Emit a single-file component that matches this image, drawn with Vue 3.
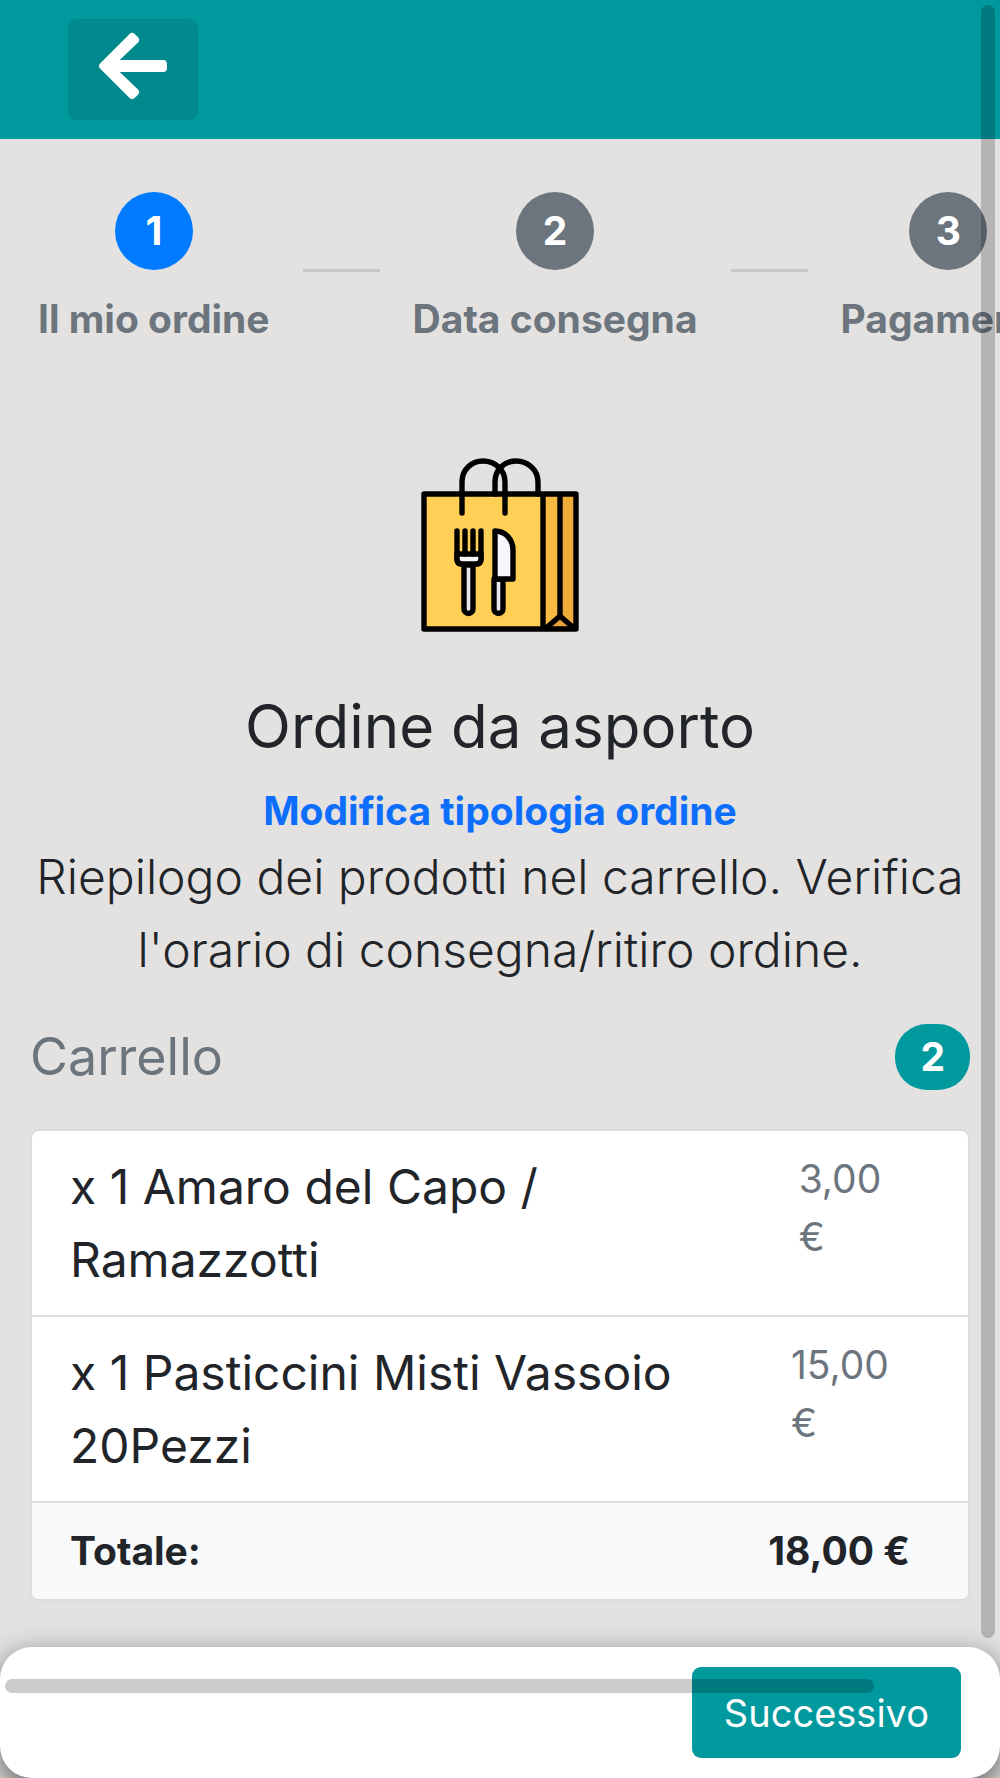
<script setup>
const steps = [
  { number: 1, label: 'Il mio ordine', active: true },
  { number: 2, label: 'Data consegna', active: false },
  { number: 3, label: 'Pagamento', active: false },
]

const items = [
  { quantity: 1, name: 'Amaro del Capo / Ramazzotti', price: '3,00 €' },
  { quantity: 1, name: 'Pasticcini Misti Vassoio 20Pezzi', price: '15,00 €' },
]
</script>

<template>
  <div class="page">
    <header class="navbar">
      <button class="back" type="button" aria-label="Indietro">
        <svg viewBox="0 0 448 512" aria-hidden="true">
          <path
            fill="currentColor"
            d="M257.5 445.1l-22.2 22.2c-9.4 9.4-24.6 9.4-33.9 0L7 273c-9.4-9.4-9.4-24.6 0-33.9L201.4 44.7c9.4-9.4 24.6-9.4 33.9 0l22.2 22.2c9.5 9.5 9.3 25-.4 34.3L136.6 216H424c13.3 0 24 10.7 24 24v32c0 13.3-10.7 24-24 24H136.6l120.5 114.8c9.8 9.3 10 24.8.4 34.3z"
          />
        </svg>
      </button>
    </header>

    <nav class="stepper" aria-label="Fasi dell'ordine">
      <template v-for="(step, index) in steps" :key="step.number">
        <span v-if="index > 0" class="line"></span>
        <button class="step" type="button">
          <span class="circle" :class="{ active: step.active }">{{ step.number }}</span>
          <span class="label">{{ step.label }}</span>
        </button>
      </template>
    </nav>

    <main class="content">
      <section class="intro">
        <svg class="bag" viewBox="0 0 158 174" aria-hidden="true">
          <path d="M3 36H122V171H3Z" fill="#ffcf56" />
          <path d="M122 36H139V171H122Z" fill="#f6bb42" />
          <path d="M139 36H155V171H139Z" fill="#eead38" />
          <path d="M126 171L139 160L152 171Z" fill="#e6a035" />
          <g fill="none" stroke="#000" stroke-width="5.4" stroke-linecap="round" stroke-linejoin="round">
            <path d="M3 36H155V171H3ZM122 36V171M139 36V158M124 171L139 158L154 171" />
            <path d="M41 55V24C41 12 50 3 62 3S84 12 84 24V55" />
            <path d="M74 36V24C74 12 83 3 95 3S117 12 117 24V36" />
            <path d="M43 107H52V151A4.500 4.500 0 0 1 43 151Z" fill="#e6e9ed" />
            <path d="M36 73V101Q36 106 41 106H55Q60 106 60 101V73" />
            <path d="M36 96H60V101Q60 106 55 106H41Q36 106 36 101Z" fill="#f5f7fa" />
            <path d="M44 73V96M52 73V96" />
            <path d="M73 121H82V151A4.500 4.500 0 0 1 73 151Z" fill="#e6e9ed" />
            <path d="M74 73C84 73 92 81 92 92V121H74Z" fill="#f5f7fa" />
          </g>
        </svg>
        <h1>Ordine da asporto</h1>
        <a href="#tipologia">Modifica tipologia ordine</a>
        <p>Riepilogo dei prodotti nel carrello. Verifica l'orario di consegna/ritiro ordine.</p>
      </section>

      <section class="cart">
        <div class="cart-head">
          <h2>Carrello</h2>
          <span class="badge">{{ items.length }}</span>
        </div>
        <ul>
          <li v-for="item in items" :key="item.name">
            <span class="name">x {{ item.quantity }} {{ item.name }}</span>
            <span class="price"><span>{{ item.price }}</span></span>
          </li>
          <li class="total">
            <strong>Totale:</strong>
            <strong>18,00 €</strong>
          </li>
        </ul>
      </section>
    </main>

    <footer class="actions">
      <button class="next" type="button">Successivo</button>
    </footer>

    <div class="scroll-y"></div>
    <div class="scroll-x"></div>
  </div>
</template>

<style>
body {
  margin: 0;
  background: #e4e2e1;
}
</style>

<style scoped>
.page {
  box-sizing: border-box;
  min-height: 100vh;
  padding-bottom: 178px;
  overflow: hidden;
  background: #e4e2e1;
  color: #212529;
  font-family: Inter, "Liberation Sans", sans-serif;
  font-size: 39px;
  font-variant-ligatures: none;
  line-height: 58px;
}

button {
  border: 0;
  font: inherit;
  cursor: pointer;
}

.navbar {
  display: flex;
  padding: 19px 68px;
  background: #00999e;
}

.back {
  display: flex;
  padding: 8px 31px 15px;
  border-radius: 9px;
  background: #008a8e;
  color: #fff;
}

.back svg {
  width: 68px;
  height: 78px;
}

.stepper {
  display: flex;
  align-items: center;
  padding: 34px 5px 0;
}

.step {
  display: flex;
  flex: none;
  flex-direction: column;
  align-items: center;
  gap: 20px;
  padding: 19px 33px;
  background: none;
  color: #6c757d;
  font-weight: 700;
  white-space: nowrap;
}

.circle {
  width: 78px;
  border-radius: 50%;
  background: #6c757d;
  color: #fff;
  line-height: 78px;
  text-align: center;
}

.circle.active {
  background: #007bff;
}

.line {
  flex: none;
  width: 77px;
  height: 3px;
  background: #c9c8c7;
}

.content {
  padding: 91px 30px 0;
}

.intro {
  display: flex;
  flex-direction: column;
  align-items: center;
  text-align: center;
}

.bag {
  width: 158px;
  height: 174px;
}

h1 {
  margin: 58px 0 20px;
  font-size: 60px;
  font-weight: 400;
  line-height: 72px;
}

a {
  color: #0d6efd;
  font-weight: 700;
  text-decoration: none;
}

p {
  margin: 0;
  font-size: 48px;
  font-weight: 300;
  line-height: 73px;
}

.cart-head {
  display: flex;
  align-items: center;
  justify-content: space-between;
  margin: 38px 0 39px;
}

h2 {
  margin: 0;
  color: #6c757d;
  font-size: 52px;
  font-weight: 400;
  line-height: 62px;
}

.badge {
  padding: 0 25px;
  border-radius: 32px;
  background: #00999e;
  color: #fff;
  font-weight: 700;
  line-height: 66px;
}

ul {
  margin: 0;
  padding: 0;
  border: 2px solid #dcdcdd;
  border-radius: 9px;
  background: #fff;
  list-style: none;
  overflow: hidden;
}

li {
  display: flex;
  justify-content: space-between;
  padding: 19px 58px 19px 38px;
}

li + li {
  border-top: 2px solid #dcdcdd;
}

.name {
  flex: 0 1 640px;
  font-size: 48px;
  line-height: 73px;
}

.price {
  display: flex;
  flex: 0 0 140px;
  justify-content: center;
  color: #6c757d;
}

.price span {
  width: min-content;
}

.total {
  background: #f8f9fa;
}

.actions {
  position: fixed;
  right: 0;
  bottom: 0;
  left: 0;
  display: flex;
  justify-content: flex-end;
  padding: 20px 39px;
  border-radius: 32px;
  background: #fff;
  box-shadow: 0 10px 30px rgba(0, 0, 0, 0.6);
}

.next {
  padding: 17px 32px 16px;
  border-radius: 9px;
  background: #00999e;
  color: #fff;
  font-size: 38px;
}

.scroll-y,
.scroll-x {
  position: fixed;
  border-radius: 7px;
  background: rgba(0, 0, 0, 0.2);
}

.scroll-y {
  top: 5px;
  right: 5px;
  bottom: 140px;
  width: 14px;
}

.scroll-x {
  right: 126px;
  bottom: 85px;
  left: 5px;
  height: 14px;
}
</style>
